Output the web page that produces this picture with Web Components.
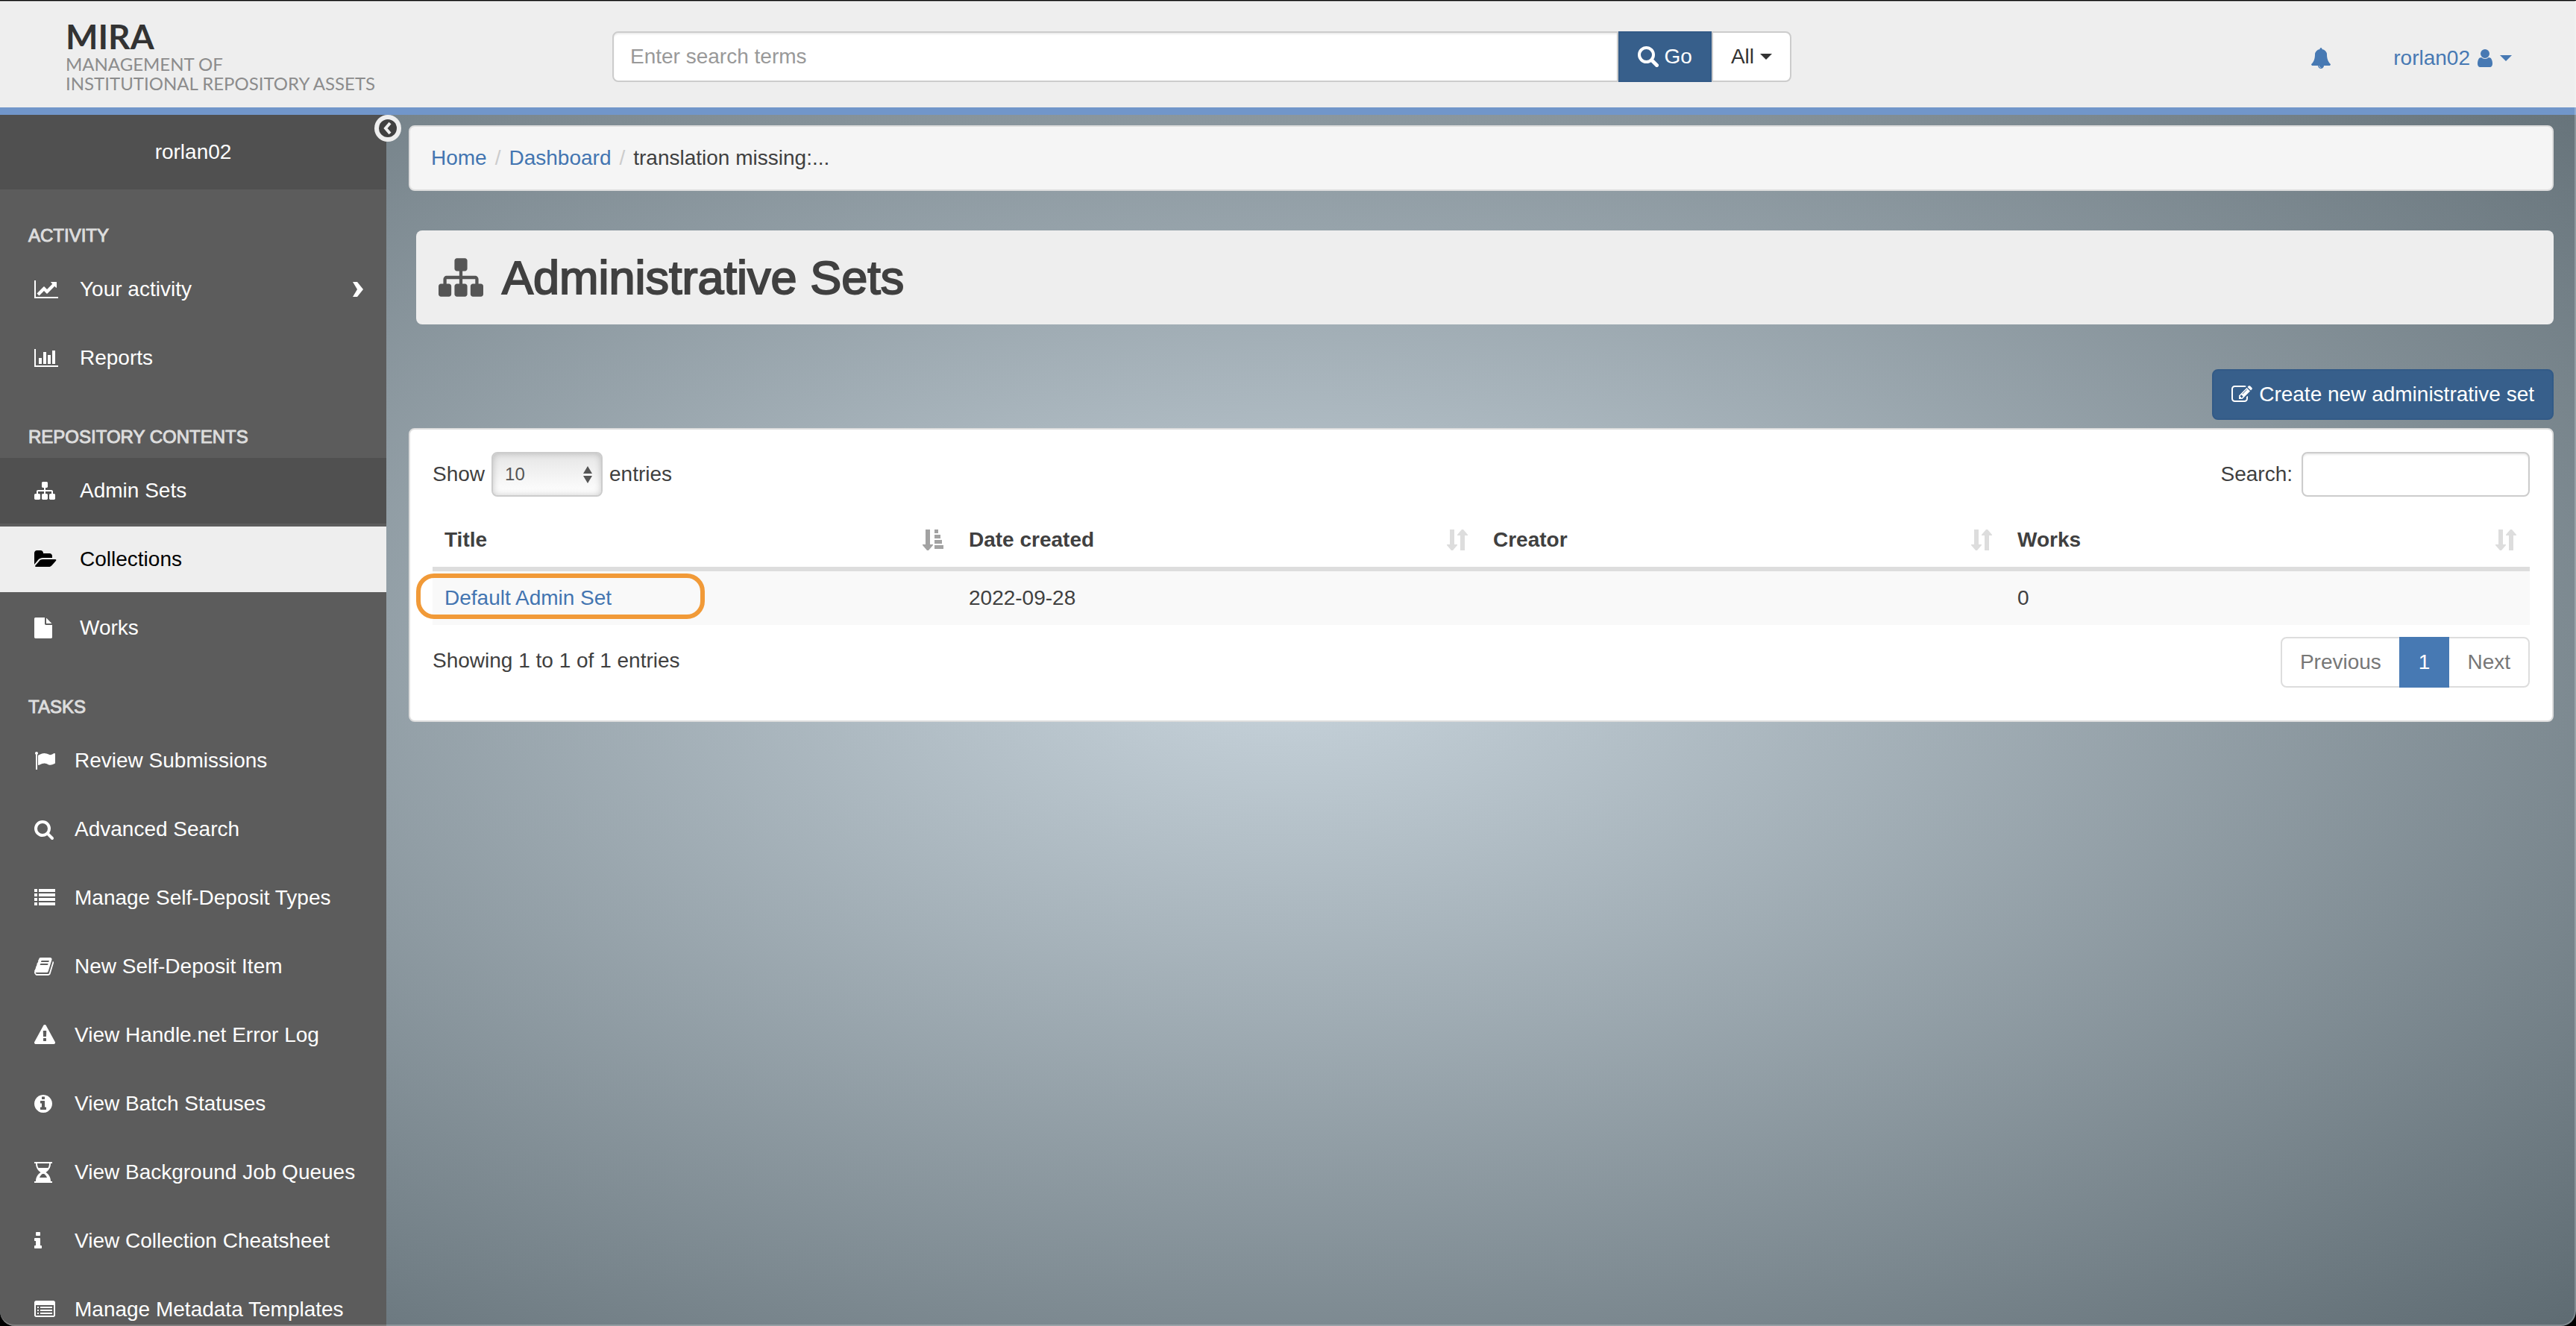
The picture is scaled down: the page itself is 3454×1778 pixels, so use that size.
<!DOCTYPE html>
<html lang="en">
<head>
<meta charset="utf-8">
<title>Administrative Sets // MIRA</title>
<style>
  html, body { margin: 0; height: 100%; background: #000; overflow: hidden; }
  body {
    font-family: "Liberation Sans", Arial, sans-serif;
    font-size: 28px;
    line-height: 40px;
    color: #404040;
    --link: #4375b1;
    --accent: #4779b3;
    --button: #375f8b;
    --line: #ddd;
  }
</style>
</head>
<body>
<mira-app>
  <mira-header slot="header"></mira-header>
  <mira-sidebar slot="sidebar" user="rorlan02">
    <nav-group label="Activity">
      <nav-item icon="line-chart" expandable>Your activity</nav-item>
      <nav-item icon="bar-chart">Reports</nav-item>
    </nav-group>
    <nav-group label="Repository Contents">
      <nav-item icon="sitemap" current>Admin Sets</nav-item>
      <nav-item icon="folder-open" hovered>Collections</nav-item>
      <nav-item icon="file">Works</nav-item>
    </nav-group>
    <nav-group label="Tasks" class="compact">
      <nav-item icon="flag">Review Submissions</nav-item>
      <nav-item icon="search">Advanced Search</nav-item>
      <nav-item icon="list">Manage Self-Deposit Types</nav-item>
      <nav-item icon="book">New Self-Deposit Item</nav-item>
      <nav-item icon="warning">View Handle.net Error Log</nav-item>
      <nav-item icon="info-circle">View Batch Statuses</nav-item>
      <nav-item icon="hourglass">View Background Job Queues</nav-item>
      <nav-item icon="info">View Collection Cheatsheet</nav-item>
      <nav-item icon="list-alt">Manage Metadata Templates</nav-item>
    </nav-group>
  </mira-sidebar>
  <bread-crumbs></bread-crumbs>
  <page-title icon="sitemap">Administrative Sets</page-title>
  <create-bar>Create new administrative set</create-bar>
  <admin-set-table></admin-set-table>
</mira-app>

<script>
const ICONS = {
  'sitemap': ['0 0 1792 1792', '<path d="M1792 1248v320q0 40-28 68t-68 28h-320q-40 0-68-28t-28-68v-320q0-40 28-68t68-28h96v-192h-512v192h96q40 0 68 28t28 68v320q0 40-28 68t-68 28h-320q-40 0-68-28t-28-68v-320q0-40 28-68t68-28h96v-192h-512v192h96q40 0 68 28t28 68v320q0 40-28 68t-68 28h-320q-40 0-68-28t-28-68v-320q0-40 28-68t68-28h96v-192q0-52 38-90t90-38h512v-192h-96q-40 0-68-28t-28-68v-320q0-40 28-68t68-28h320q40 0 68 28t28 68v320q0 40-28 68t-68 28h-96v192h512q52 0 90 38t38 90v192h96q40 0 68 28t28 68z"/>'],
  'line-chart': ['0 0 2048 1792', '<path d="M2048 1536v128h-2048v-1536h128v1408h1920zm-128-1248v435q0 21-19.5 29.5t-35.5-7.5l-121-121-633 633q-10 10-23 10t-23-10l-233-233-416 416-192-192 585-585q10-10 23-10t23 10l233 233 464-464-121-121q-16-16-7.5-35.5t29.5-19.5h435q14 0 23 9t9 23z"/>'],
  'bar-chart': ['0 0 2048 1792', '<path d="M640 896v512h-256v-512h256zm384-512v1024h-256v-1024h256zm1024 1152v128h-2048v-1536h128v1408h1920zm-640-896v768h-256v-768h256zm384-384v1152h-256v-1152h256z"/>'],
  'folder-open': ['0 0 1920 1792', '<path d="M1879 952q0 31-31 66l-336 396q-43 51-120.5 86.5t-143.5 35.5h-1088q-34 0-60.5-13t-26.5-43q0-31 31-66l336-396q43-51 120.5-86.5t143.5-35.5h1088q34 0 60.5 13t26.5 43zm-343-344v160h-832q-94 0-197 47.5t-164 119.5l-337 396-5 6q0-4-.5-12.5t-.5-12.5v-960q0-92 66-158t158-66h320q92 0 158 66t66 158v32h544q92 0 158 66t66 158z"/>'],
  'file': ['128 0 1536 1792', '<path d="M1152 512v-472q22 14 36 28l408 408q14 14 28 36h-472zm-128 32q0 40 28 68t68 28h544v1056q0 40-28 68t-68 28h-1344q-40 0-68-28t-28-68v-1600q0-40 28-68t68-28h800v544z"/>'],
  'flag': ['0 0 1792 1792', '<path d="M320 256q0 72-64 110v1266q0 13-9.5 22.5t-22.5 9.5h-64q-13 0-22.5-9.5t-9.5-22.5v-1266q-64-38-64-110 0-53 37.5-90.5t90.5-37.5 90.5 37.5 37.5 90.5zm1472 64v763q0 25-12.5 38.5t-39.5 27.5q-215 116-369 116-61 0-123.5-22t-108.5-48-115.5-48-142.5-22q-192 0-464 146-17 9-33 9-26 0-45-19t-19-45v-742q0-32 31-55 21-14 79-43 236-120 421-120 107 0 200 29t219 88q38 19 88 19 54 0 117.5-21t110-47 88-47 54.5-21q26 0 45 19t19 45z"/>'],
  'search': ['64 0 1664 1792', '<path d="M1216 832q0-185-131.5-316.5t-316.5-131.5-316.5 131.5-131.5 316.5 131.5 316.5 316.5 131.5 316.5-131.5 131.5-316.5zm512 832q0 52-38 90t-90 38q-54 0-90-38l-343-342q-179 124-399 124-143 0-273.5-55.5t-225-150-150-225-55.5-273.5 55.5-273.5 150-225 225-150 273.5-55.5 273.5 55.5 225 150 150 225 55.5 273.5q0 220-124 399l343 343q37 37 37 90z"/>'],
  'list': ['0 0 1792 1792', '<path d="M0 128h256v256H0zM384 128h1408v256H384zM0 512h256v256H0zM384 512h1408v256H384zM0 896h256v256H0zM384 896h1408v256H384zM0 1280h256v256H0zM384 1280h1408v256H384z"/>'],
  'book': ['64 0 1664 1792', '<path d="M1703 478q40 57 18 129l-275 906q-19 64-76.5 107.5t-122.5 43.5h-923q-77 0-148.5-53.5t-99.5-131.5q-24-67-2-127 0-4 3-27t4-37q1-8-3-21.5t-3-19.5q2-11 8-21t16.5-23.5 16.5-23.5q23-38 45-91.5t30-91.5q3-10 .5-30t-.5-28q3-11 17-28t17-23q21-36 42-92t25-90q1-9-2.5-32t.5-28q4-13 22-30.5t22-22.5q19-26 42.5-84.5t27.5-96.5q1-8-3-25.5t-2-26.5q2-8 9-18t18-23 17-21q8-12 16.5-30.5t15-35 16-36 19.5-32 26.5-23.5 36-11.5 47.5 5.5l-1 3q38-9 51-9h761q74 0 114 56t18 130l-274 906q-36 119-71.5 153.5t-128.5 34.5h-869q-27 0-38 15-11 16-1 43 24 70 144 70h923q29 0 56-15.5t35-41.5l300-987q7-22 5-57 38 15 59 43zm-1064 2q-4 13 2 22.5t20 9.5h608q13 0 25.5-9.5t16.5-22.5l21-64q4-13-2-22.5t-20-9.5h-608q-13 0-25.5 9.5t-16.5 22.5zm-83 256q-4 13 2 22.5t20 9.5h608q13 0 25.5-9.5t16.5-22.5l21-64q4-13-2-22.5t-20-9.5h-608q-13 0-25.5 9.5t-16.5 22.5z"/>'],
  'warning': ['0 0 1792 1792', '<path d="M1024 1375v-190q0-14-9.5-23.5t-22.5-9.5h-192q-13 0-22.5 9.5t-9.5 23.5v190q0 14 9.5 23.5t22.5 9.5h192q13 0 22.5-9.5t9.5-23.5zm-2-374l18-459q0-12-10-19-13-11-24-11h-220q-11 0-24 11-10 7-10 21l17 457q0 10 10 16.5t24 6.5h185q14 0 23.5-6.5t10.5-16.5zm-14-934l768 1408q35 63-2 126-17 29-46.5 46t-63.5 17h-1536q-34 0-63.5-17t-46.5-46q-37-63-2-126l768-1408q17-31 47-49t65-18 65 18 47 49z"/>'],
  'info-circle': ['128 0 1536 1792', '<path d="M1152 1376v-160q0-14-9-23t-23-9h-96v-512q0-14-9-23t-23-9h-320q-14 0-23 9t-9 23v160q0 14 9 23t23 9h96v320h-96q-14 0-23 9t-9 23v160q0 14 9 23t23 9h448q14 0 23-9t9-23zm-128-896v-160q0-14-9-23t-23-9h-192q-14 0-23 9t-9 23v160q0 14 9 23t23 9h192q14 0 23-9t9-23zm640 416q0 209-103 385.5t-279.5 279.5-385.5 103-385.5-103-279.5-279.5-103-385.5 103-385.5 279.5-279.5 385.5-103 385.5 103 279.5 279.5 103 385.5z"/>'],
  'hourglass': ['0 0 24 28', '<path fill-rule="evenodd" d="M0 0h24v2H0zM0 26h24v2H0zM2 2h20c0 6-3 9.500-6.500 12C19 16.500 22 20 22 26H2c0-6 3-9.500 6.500-12C5 11.500 2 8 2 2zM4 2c0 2.500.6 4.500 1.500 6h13c.9-1.500 1.500-3.500 1.500-6zM7 21h10c-1-2.500-2.500-4-4-5h-2c-1.500 1-3 2.500-4 5z"/>'],
  'info': ['576 0 640 1792', '<path d="M1216 1344v128q0 26-19 45t-45 19h-512q-26 0-45-19t-19-45v-128q0-26 19-45t45-19h64v-384h-64q-26 0-45-19t-19-45v-128q0-26 19-45t45-19h384q26 0 45 19t19 45v576h64q26 0 45 19t19 45zm-128-1152v192q0 26-19 45t-45 19h-256q-26 0-45-19t-19-45v-192q0-26 19-45t45-19h256q26 0 45 19t19 45z"/>'],
  'list-alt': ['0 0 1792 1792', '<path fill-rule="evenodd" d="M160 128h1472q66 0 113 47t47 113v1088q0 66-47 113t-113 47H160q-66 0-113-47T0 1376V288q0-66 47-113t113-47zM128 512v864q0 32 32 32h1472q32 0 32-32V512zM256 640h128v128H256zM512 640h1024v128H512zM256 896h128v128H256zM512 896h1024v128H512zM256 1152h128v128H256zM512 1152h1024v128H512z"/>'],
  'bell': ['64 0 1664 1792', '<path d="M912 1696q0-16-16-16-59 0-101.5-42.5t-42.5-101.5q0-16-16-16t-16 16q0 73 51.5 124.5t124.5 51.5q16 0 16-16zm816-288q0 52-38 90t-90 38h-448q0 106-75 181t-181 75-181-75-75-181h-448q-52 0-90-38t-38-90q50-42 91-88t85-119.5 74.5-158.5 50-206 19.5-260q0-152 117-282.5t307-158.5q-8-19-8-39 0-40 28-68t68-28 68 28 28 68q0 20-8 39 190 28 307 158.5t117 282.500q0 139 19.500 260t50 206 74.500 158.500 85 119.500 91 88z"/>'],
  'user': ['256 0 1280 1792', '<path d="M1536 1399q0 109-62.5 187t-150.5 78h-854q-88 0-150.5-78t-62.5-187q0-85 8.5-160.5t31.5-152 58.5-131 94-89 134.5-34.5q131 128 313 128t313-128q76 0 134.5 34.5t94 89 58.5 131 31.5 152 8.5 160.500zm-256-887q0 159-112.500 271.500t-271.500 112.500-271.500-112.500-112.500-271.500 112.500-271.500 271.500-112.500 271.500 112.500 112.500 271.500z"/>'],
  'edit': ['0 0 1792 1792', '<path d="M888 1184l116-116-152-152-116 116v56h96v96h56zm440-720q-16-16-33 1l-350 350q-17 17-1 33t33-1l350-350q17-17 1-33zm80 594v190q0 119-84.5 203.5t-203.5 84.5h-832q-119 0-203.5-84.5t-84.5-203.5v-832q0-119 84.5-203.5t203.5-84.5h832q63 0 117 25 15 7 18 23 3 17-9 29l-49 49q-14 14-32 8-23-6-45-6h-832q-66 0-113 47t-47 113v832q0 66 47 113t113 47h832q66 0 113-47t47-113v-126q0-13 9-22l64-64q15-15 35-7t20 29zm-96-738l288 288-672 672h-288v-288zm444 132l-92 92-288-288 92-92q28-28 68-28t68 28l152 152q28 28 28 68t-28 68z"/>'],
  'lens': ['0 0 28 28', '<circle cx="11.500" cy="11.500" r="9.500" fill="none" stroke="currentColor" stroke-width="4"/><path d="M19 19l6.500 6.500" stroke="currentColor" stroke-width="5" stroke-linecap="round"/>'],
  'caret': ['0 -10 16 28', '<path d="M0 0h16l-8 8z"/>'],
  'chevron': ['0 -4 14 28', '<path d="M0 0h6l8 10-8 10H0l6-10z"/>'],
  'sort': ['0 0 28 28', '<path d="M4 0h6v20h4v1l-6 7H6l-6-7v-1h4zM18 28h6V8h4V7l-6-7h-2l-6 7v1h4z"/>'],
  'sort-asc': ['0 0 28 28', '<path d="M4 0h6v20h4v1l-6 7H6l-6-7v-1h4zM16 0h5v5h-5zM16 7h8v5h-8zM16 14h10v5H16zM16 21h12v5H16z"/>'],
  'select-arrows': ['0 -3 12 28', '<path d="M0 10l6-10 6 10zM0 13h12l-6 10z"/>'],
  'collapse': ['0 0 24 24', '<circle cx="12" cy="12" r="12"/><path d="M15 5l-6 7 6 7" fill="none" stroke="#eee" stroke-width="4"/>']
};

function define(name, css, html, setup) {
  const template = document.createElement('template');
  template.innerHTML = `<style>*, ::before, ::after { box-sizing: border-box; } ${css}</style>${html}`;
  customElements.define(name, class extends HTMLElement {
    connectedCallback() {
      if (this.shadowRoot) return;
      const root = this.attachShadow({ mode: 'open' });
      root.append(template.content.cloneNode(true));
      if (setup) setup(this, root);
    }
  });
}

/* Icon height follows --size; width follows the drawing's own proportions. */
define('ui-icon', `
  :host { display: inline-flex; flex: none; }
  svg { display: block; height: var(--size, 28px); width: auto; fill: currentColor; }
`, '', (el, root) => {
  const [box, body] = ICONS[el.getAttribute('name')];
  const holder = document.createElement('template');
  holder.innerHTML = `<svg viewBox="${box}" aria-hidden="true">${body}</svg>`;
  root.append(holder.content);
});

define('mira-app', `
  :host { display: flex; flex-direction: column; height: 100vh; box-sizing: border-box; border-top: 1px solid #000;
    border-radius: 0 0 20px 20px; overflow: hidden; position: relative;
    background: radial-gradient(ellipse farthest-corner at 50% 50%, #c8d4dc, #5e6b72); }
  :host::after { content: ""; position: absolute; inset: 0; pointer-events: none; border: 2px solid rgba(255,255,255,.22);
    border-top: 1px solid #999; border-left: 0; border-radius: 0 0 20px 20px; z-index: 2; }
  .body { display: flex; flex: 1; min-height: 0; }
  main { flex: 1; min-width: 0; padding: 14px 30px; display: flex; flex-direction: column; }
`, `<slot name="header"></slot><div class="body"><slot name="sidebar"></slot><main><slot></slot></main></div>`);

define('mira-header', `
  :host { display: grid; grid-template-columns: 821fr 1581fr 1052fr; align-items: start; height: 153px; box-sizing: border-box;
    flex: none; background: #eee; border-bottom: 10px solid #7196ca; }
  .logo { display: block; padding: 24px 0 0 88px; text-decoration: none; font-family: Lato, "Open Sans", sans-serif;
    font-size: 24px; line-height: 26px; color: #8c8c8c; }
  .logo strong { display: block; font-size: 46px; line-height: 48px; font-weight: 700; color: #333; }
  form { display: flex; margin: 41px 0 0; }
  input, button { font: inherit; height: 68px; border: 2px solid #ccc; margin: 0; }
  input { flex: 1; min-width: 0; padding: 0 22px; border-radius: 8px 0 0 8px; background: #fff;
    box-shadow: inset 0 2px 2px rgba(0,0,0,.075); color: #555; }
  input::placeholder { color: #999; opacity: 1; }
  button { display: flex; align-items: center; gap: 8px; padding: 0 24px; }
  .go { background: var(--button); border-color: #325a87; color: #fff; }
  .all { background: #fff; color: #333; border-radius: 0 8px 8px 0; }
  nav { display: flex; justify-content: flex-end; align-items: center; gap: 84px; padding: 57px 86px 0 0; }
  nav a { color: var(--accent); text-decoration: none; display: flex; align-items: center; gap: 10px; }
`, `<a class="logo" href="#"><strong>MIRA</strong>MANAGEMENT OF<br>INSTITUTIONAL REPOSITORY ASSETS</a>
  <form role="search" onsubmit="return false">
    <input type="text" aria-label="Search terms" placeholder="Enter search terms">
    <button class="go" type="submit"><ui-icon name="lens"></ui-icon>Go</button>
    <button class="all" type="button">All<ui-icon name="caret"></ui-icon></button>
  </form>
  <nav>
    <a href="#" aria-label="Notifications"><ui-icon name="bell"></ui-icon></a>
    <a href="#">rorlan02<ui-icon name="user"></ui-icon><ui-icon name="caret"></ui-icon></a>
  </nav>`);

define('mira-sidebar', `
  :host { display: block; position: relative; flex: 0 0 518px; background: #5c5c5c; color: #fff; z-index: 1; }
  .scroll { height: 100%; overflow: hidden; }
  .user { background: #505050; padding: 30px 0; text-align: center; }
  button { position: absolute; top: 0; right: -20px; width: 36px; height: 36px; padding: 6px; border: 0; border-radius: 50%;
    background: #eee; color: #404040; --size: 24px; display: flex; }
`, `<div class="scroll"><div class="user"></div><slot></slot></div>
  <button type="button" aria-label="Toggle sidebar"><ui-icon name="collapse"></ui-icon></button>`,
  (el, root) => { root.querySelector('.user').textContent = el.getAttribute('user'); });

define('nav-group', `
  :host { display: block; --slot: 61px; }
  :host(.compact) { --slot: 54px; }
  h2 { margin: 0; padding: 44px 38px 10px; font-size: 24px; line-height: 36px; font-weight: 400; text-transform: uppercase; color: #ddd;
    -webkit-text-stroke: 1px #ddd; }
  .items { display: flex; flex-direction: column; gap: 4px; }
`, `<h2></h2><div class="items"><slot></slot></div>`,
  (el, root) => { root.querySelector('h2').textContent = el.getAttribute('label'); });

define('nav-item', `
  :host { display: block; }
  :host([current]) { background: #505050; }
  :host([hovered]) { background: #eee; --ink: #000; }
  a { display: flex; align-items: center; padding: 24px 31px 24px 46px; color: var(--ink, #fff); text-decoration: none; white-space: nowrap; }
  .mark { width: var(--slot); flex: none; display: flex; }
  .more { margin-left: auto; display: flex; }
`, `<a href="#"><span class="mark"></span><span><slot></slot></span></a>`, (el, root) => {
  root.querySelector('.mark').innerHTML = `<ui-icon name="${el.getAttribute('icon')}"></ui-icon>`;
  if (el.hasAttribute('expandable'))
    root.querySelector('a').insertAdjacentHTML('beforeend', '<span class="more"><ui-icon name="chevron"></ui-icon></span>');
});

define('bread-crumbs', `
  :host { display: block; }
  ol { display: flex; list-style: none; margin: 0; padding: 22px 28px; background: #f5f5f5; border: 2px solid var(--line); border-radius: 8px; }
  li + li::before { content: "/"; color: #ccc; margin: 0 11px; }
  a { color: var(--link); text-decoration: none; }
`, `<nav aria-label="Breadcrumb"><ol><li><a href="#">Home</a></li><li><a href="#">Dashboard</a></li><li>translation missing:...</li></ol></nav>`);

define('page-title', `
  :host { display: block; margin: 53px 0 0 10px; }
  h1 { display: flex; align-items: center; gap: 25px; margin: 0; padding: 28px 30px; background: #eee; border-radius: 8px;
    font-size: 63px; line-height: 70px; font-weight: 400; -webkit-text-stroke: 2px #404040; }
  ui-icon { --size: 60px; color: #555; }
`, `<h1><slot></slot></h1>`, (el, root) => {
  root.querySelector('h1').insertAdjacentHTML('afterbegin', `<ui-icon name="${el.getAttribute('icon')}"></ui-icon>`);
});

define('create-bar', `
  :host { display: flex; justify-content: flex-end; margin: 60px 0 11px; }
  a { display: flex; align-items: center; gap: 9px; height: 68px; padding: 0 24px; border: 2px solid #325a87; border-radius: 8px;
    background: var(--button); color: #fff; text-decoration: none; }
`, `<a href="#"><ui-icon name="edit"></ui-icon><span><slot></slot></span></a>`);

define('admin-set-table', `
  :host { display: block; background: #fff; border: 2px solid var(--line); border-radius: 8px; padding: 30px 30px 44px; box-sizing: border-box; }
  .bar { display: flex; justify-content: space-between; align-items: flex-start; }
  .top { margin-bottom: 22px; }
  .bottom { margin-top: 16px; }
  .info { padding-top: 12px; }
  label { display: flex; align-items: center; gap: 9px; }
  .filter { gap: 12px; }
  .pick { position: relative; display: flex; }
  .pick ui-icon { position: absolute; right: 14px; top: 16px; color: #555; pointer-events: none; }
  select, input { height: 60px; margin: 0; border: 2px solid #ccc; border-radius: 8px; font: inherit; color: #555;
    box-shadow: inset 0 2px 2px rgba(0,0,0,.075); background: #fff; }
  select { appearance: none; width: 149px; padding: 0 16px; font-size: 24px; background: linear-gradient(#e6e6e6, #fff);
    box-shadow: inset 0 0 10px rgba(0,0,0,.2); }
  input { width: 306px; padding: 0 16px; }
  table { width: 100%; table-layout: fixed; border-collapse: separate; border-spacing: 0; }
  th, td { text-align: left; padding: 16px; }
  th { border-bottom: 6px solid var(--line); padding-right: 18px; }
  th div { display: flex; justify-content: space-between; align-items: center; }
  th ui-icon { color: #ddd; }
  th[aria-sort] ui-icon { color: #a2a2a2; }
  td { background: #f9f9f9; }
  a { color: var(--link); text-decoration: none; }
  .marked { position: relative; }
  .marked::after { content: ""; position: absolute; left: -22px; top: 3px; width: 387px; height: 61px; border: 6px solid #f19a38;
    border-radius: 24px; pointer-events: none; }
  ul { display: flex; list-style: none; margin: 0; padding: 0; }
  li a { display: block; padding: 12px 24px; border: 2px solid var(--line); color: #777; background: #fff; }
  li + li a { margin-left: -2px; }
  li:first-child a { border-radius: 8px 0 0 8px; }
  li:last-child a { border-radius: 0 8px 8px 0; }
  li a[aria-current] { background: var(--accent); border-color: var(--accent); color: #fff; position: relative; z-index: 1; }
`, `<div class="bar top">
    <label for="length">Show <span class="pick"><select id="length"><option>10</option><option>25</option><option>50</option></select><ui-icon name="select-arrows"></ui-icon></span> entries</label>
    <label class="filter" for="filter">Search: <input id="filter" type="search"></label>
  </div>
  <table>
    <thead><tr>
      <th scope="col" aria-sort="ascending"><div>Title<ui-icon name="sort-asc"></ui-icon></div></th>
      <th scope="col"><div>Date created<ui-icon name="sort"></ui-icon></div></th>
      <th scope="col"><div>Creator<ui-icon name="sort"></ui-icon></div></th>
      <th scope="col"><div>Works<ui-icon name="sort"></ui-icon></div></th>
    </tr></thead>
    <tbody><tr><td class="marked"><a href="#">Default Admin Set</a></td><td>2022-09-28</td><td></td><td>0</td></tr></tbody>
  </table>
  <div class="bar bottom">
    <span class="info">Showing 1 to 1 of 1 entries</span>
    <ul><li><a href="#">Previous</a></li><li><a href="#" aria-current="page">1</a></li><li><a href="#">Next</a></li></ul>
  </div>`);
</script>
</body>
</html>
